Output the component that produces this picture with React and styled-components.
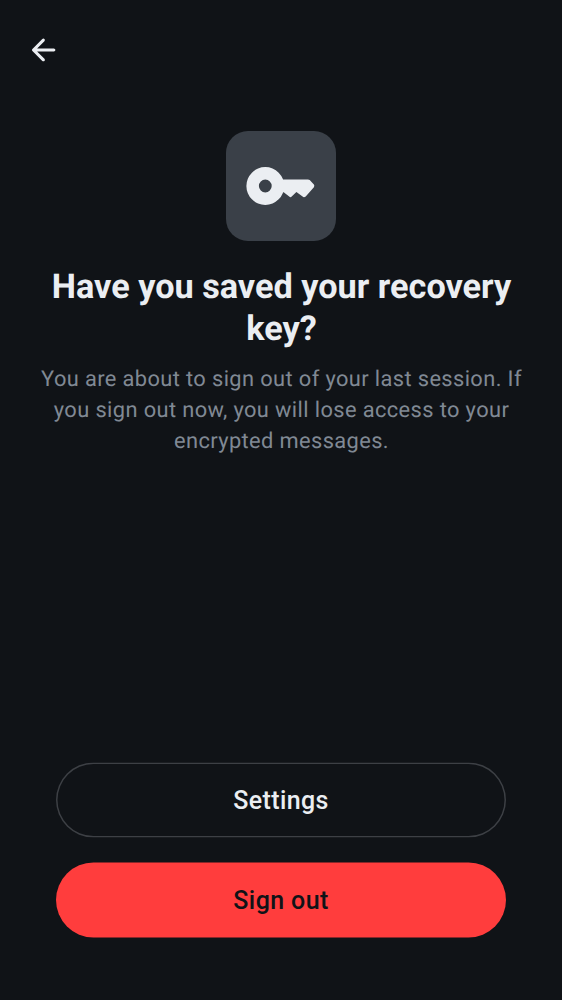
import React from "react";
import styled, { createGlobalStyle } from "styled-components";

const GlobalStyle = createGlobalStyle`
  *, *::before, *::after { box-sizing: border-box; }
  body { margin: 0; background: #101317; }
`;

const Screen = styled.main`
  display: flex;
  flex-direction: column;
  height: 1000px;
  width: 562px;
  padding: 25px 19px 62px;
  background: #101317;
  font-family: Roboto, "Noto Sans", sans-serif;
  text-rendering: geometricPrecision;
`;

const BackButton = styled.button`
  display: grid;
  place-items: center;
  width: 50px;
  height: 50px;
  padding: 0;
  border: 0;
  background: none;
  color: #ebeef2;
`;

const Header = styled.header`
  display: flex;
  flex-direction: column;
  align-items: center;
  margin-top: 56px;
  text-align: center;
`;

const IconTile = styled.div`
  width: 109.6px;
  height: 109.6px;
  border-radius: 22px;
  background: #3a4048;
  color: #ebeef2;

  svg { display: block; }
`;

const Title = styled.h1`
  margin: 25.4px 0 0;
  padding-left: 1px;
  font-size: 34.25px;
  line-height: 42px;
  font-weight: 700;
  color: #ebeef2;
`;

const Message = styled.p`
  margin: 13.8px 0 0;
  padding-left: 1px;
  font-size: 21.85px;
  line-height: 31.2px;
  letter-spacing: 0.38px;
  color: #808994;
`;

const Actions = styled.footer`
  display: flex;
  flex-direction: column;
  gap: 25px;
  margin-top: auto;
  padding: 0 37px;
  transform: translateY(-0.5px);
`;

const Button = styled.button`
  height: 75px;
  padding: 0;
  border: 0;
  border-radius: 37.5px;
  background: ${(p) => (p.$destructive ? "#ff3d3d" : "transparent")};
  box-shadow: ${(p) => (p.$destructive ? "none" : "inset 0 0 0 1.5px #3d4045")};
  color: ${(p) => (p.$destructive ? "#101317" : "#ebeef2")};
  font-family: inherit;
  font-size: 24.98px;
  font-weight: 500;
  letter-spacing: 0.4px;
`;

const BackIcon = () => (
  <svg width="36" height="36" viewBox="0 0 24 24" fill="currentColor">
    <path d="m10.875 19.3-6.6-6.6a.9.9 0 0 1-.213-.325A1.1 1.1 0 0 1 4 12q0-.2.063-.375a.9.9 0 0 1 .212-.325l6.6-6.6a.98.98 0 0 1 .687-.288.93.93 0 0 1 .713.288q.275.275.287.687a.93.93 0 0 1-.287.713L7.4 11h11.175q.424 0 .713.287.287.288.287.713 0 .424-.287.713a.97.97 0 0 1-.713.287H7.4l4.9 4.9q.275.275.275.7t-.3.7a.95.95 0 0 1-.7.275.95.95 0 0 1-.7-.275" />
  </svg>
);

const KeyIcon = () => (
  <svg width="109.6" height="109.6" viewBox="0 0 109.6 109.6" fill="currentColor">
    <path
      fillRule="evenodd"
      d="M39.3 36.1a18.9 18.9 0 1 0 0 37.8 18.9 18.9 0 1 0 0-37.8Zm0 12.5a6.4 6.4 0 1 1 0 12.8 6.4 6.4 0 1 1 0-12.8Z"
    />
    <path d="M55 48.4H82q1 0 1.7.7l4.2 4.3q.9 1.1 0 2.8L79.7 65.4q-1.6 1.4-3.1.2L70.4 60.9 65.7 65.6q-1.2 1.1-2.5 0L57.7 61.2H55Z" />
  </svg>
);

export default function App() {
  return (
    <>
      <GlobalStyle />
      <Screen>
        <BackButton aria-label="Back">
          <BackIcon />
        </BackButton>
        <Header>
          <IconTile>
            <KeyIcon />
          </IconTile>
          <Title>
            Have you saved your recovery
            <br />
            key?
          </Title>
          <Message>
            You are about to sign out of your last session. If
            <br />
            you sign out now, you will lose access to your
            <br />
            encrypted messages.
          </Message>
        </Header>
        <Actions>
          <Button>Settings</Button>
          <Button $destructive>Sign out</Button>
        </Actions>
      </Screen>
    </>
  );
}
